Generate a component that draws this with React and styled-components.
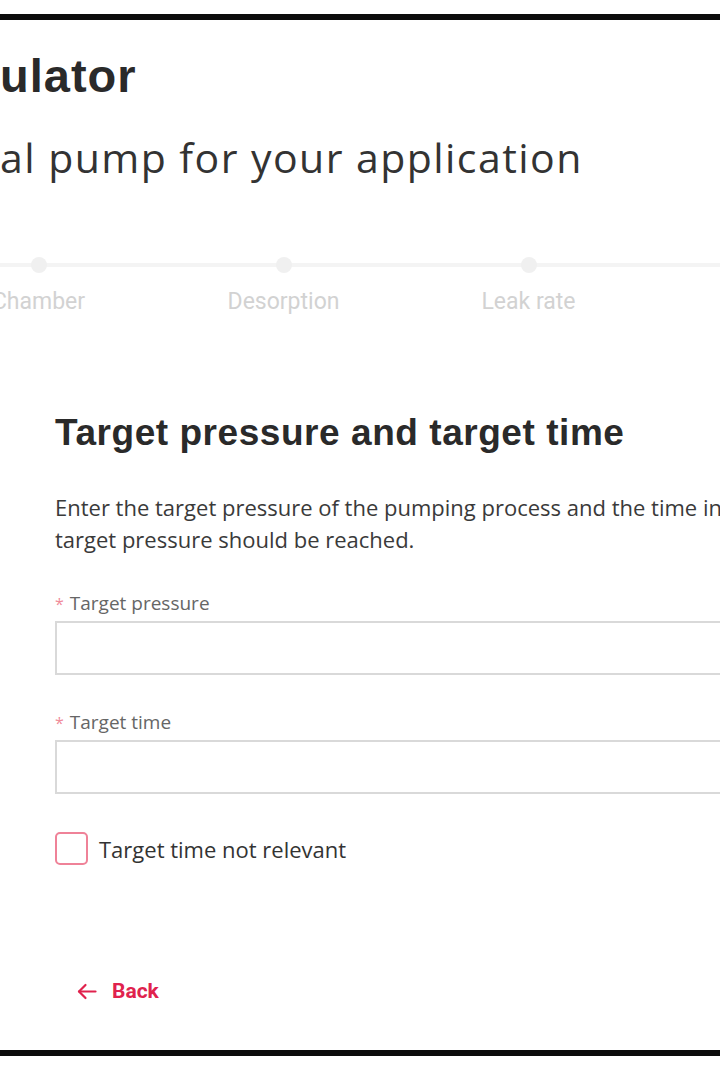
import React from 'react';
import styled, { createGlobalStyle } from 'styled-components';

const GlobalStyle = createGlobalStyle`
  html, body {
    margin: 0;
    padding: 0;
    background: #ffffff;
    overflow: hidden;
  }
  body {
    font-family: "Open Sans", "Liberation Sans", sans-serif;
  }
`

const Frame = styled.div`
  box-sizing: border-box;
  margin-top: 14px;
  height: 1042px;
  width: 720px;
  border-top: 6px solid #0c0c0c;
  border-bottom: 6px solid #0c0c0c;
  overflow: hidden;
  display: flex;
  flex-direction: column;
`

const Title = styled.h1`
  margin: 28px 0 0;
  font-family: "Liberation Sans", Arial, sans-serif;
  font-weight: 700;
  font-size: 47px;
  line-height: 56px;
  letter-spacing: 1px;
  color: #2a2a2a;
  white-space: nowrap;
`

const Subtitle = styled.p`
  margin: 25px 0 0;
  font-family: "Open Sans", sans-serif;
  font-size: 41px;
  line-height: 56px;
  letter-spacing: 1.45px;
  color: #333333;
  white-space: nowrap;
`

const Stepper = styled.div`
  position: relative;
  margin: 72px 0 0 -84px;
  display: flex;

  &::before {
    content: '';
    position: absolute;
    left: 0;
    right: 0;
    top: 6px;
    height: 4px;
    background: #f4f4f4;
  }
`

const Step = styled.div`
  position: relative;
  flex: 0 0 245px;
  display: flex;
  flex-direction: column;
  align-items: center;
`

const Dot = styled.span`
  width: 16px;
  height: 16px;
  border-radius: 50%;
  background: #f0f0f0;
`

const StepLabel = styled.span`
  margin-top: 15px;
  font-family: Roboto, "Liberation Sans", sans-serif;
  font-size: 23px;
  line-height: 27px;
  color: #d2d2d2;
  white-space: nowrap;
`

const Form = styled.div`
  width: 900px;
  padding-left: 55px;
  margin-top: 96px;
  display: flex;
  flex-direction: column;
`

const Heading = styled.h2`
  margin: 0;
  font-family: "Liberation Sans", Arial, sans-serif;
  font-weight: 700;
  font-size: 37px;
  line-height: 44px;
  letter-spacing: 0.55px;
  color: #2a2a2a;
`

const Intro = styled.p`
  margin: 36px 0 0;
  font-size: 22px;
  line-height: 32px;
  color: #3a3a3a;
  white-space: nowrap;
`

const Field = styled.div`
  margin-top: ${p => p.$gap}px;
  display: flex;
  flex-direction: column;
`

const Label = styled.label`
  display: flex;
  align-items: center;
  gap: 6px;
  font-size: 19px;
  line-height: 24px;
  color: #666666;
`

const Star = styled.span`
  color: #f08b9a;
  font-size: 16px;
  line-height: 1;
  margin-top: 2px;
`

const Input = styled.input`
  box-sizing: border-box;
  margin-top: 6px;
  width: 100%;
  height: 54px;
  border: 2px solid #d9d9d9;
  border-radius: 0;
  background: #fff;
  outline: none;
`

const CheckRow = styled.label`
  margin-top: 38px;
  display: flex;
  align-items: center;
  gap: 11px;
  font-size: 22px;
  line-height: 32px;
  color: #333333;
`

const Box = styled.span`
  box-sizing: border-box;
  width: 33px;
  height: 33px;
  border: 2px solid #ef8298;
  border-radius: 5px;
`

const BackButton = styled.button`
  margin: 112px 0 0 22px;
  padding: 0;
  align-self: flex-start;
  display: flex;
  align-items: center;
  gap: 15px;
  border: none;
  background: none;
  font-family: Roboto, "Liberation Sans", sans-serif;
  font-weight: 700;
  font-size: 21px;
  line-height: 28px;
  color: #e0224d;
`

const steps = ['Chamber', 'Desorption', 'Leak rate']

const App = () => {
  return (
    <>
      <GlobalStyle />
      <Frame>
        <Title>ulator</Title>
        <Subtitle>al pump for your application</Subtitle>

        <Stepper>
          {steps.map(s => (
            <Step key={s}>
              <Dot />
              <StepLabel>{s}</StepLabel>
            </Step>
          ))}
        </Stepper>

        <Form>
          <Heading>Target pressure and target time</Heading>
          <Intro>
            Enter the target pressure of the pumping process and the time in
            <br />
            target pressure should be reached.
          </Intro>

          <Field $gap={36}>
            <Label><Star>*</Star>Target pressure</Label>
            <Input type="text" />
          </Field>

          <Field $gap={35}>
            <Label><Star>*</Star>Target time</Label>
            <Input type="text" />
          </Field>

          <CheckRow>
            <Box />
            Target time not relevant
          </CheckRow>

          <BackButton>
            <svg width="20" height="17" viewBox="0 0 20 17" fill="none" stroke="currentColor" strokeWidth="2.2" strokeLinecap="round" strokeLinejoin="round">
              <path d="M18.5 8.5H2" />
              <path d="M8.5 2 2 8.5 8.5 15" />
            </svg>
            Back
          </BackButton>
        </Form>
      </Frame>
    </>
  )
}

export default App
